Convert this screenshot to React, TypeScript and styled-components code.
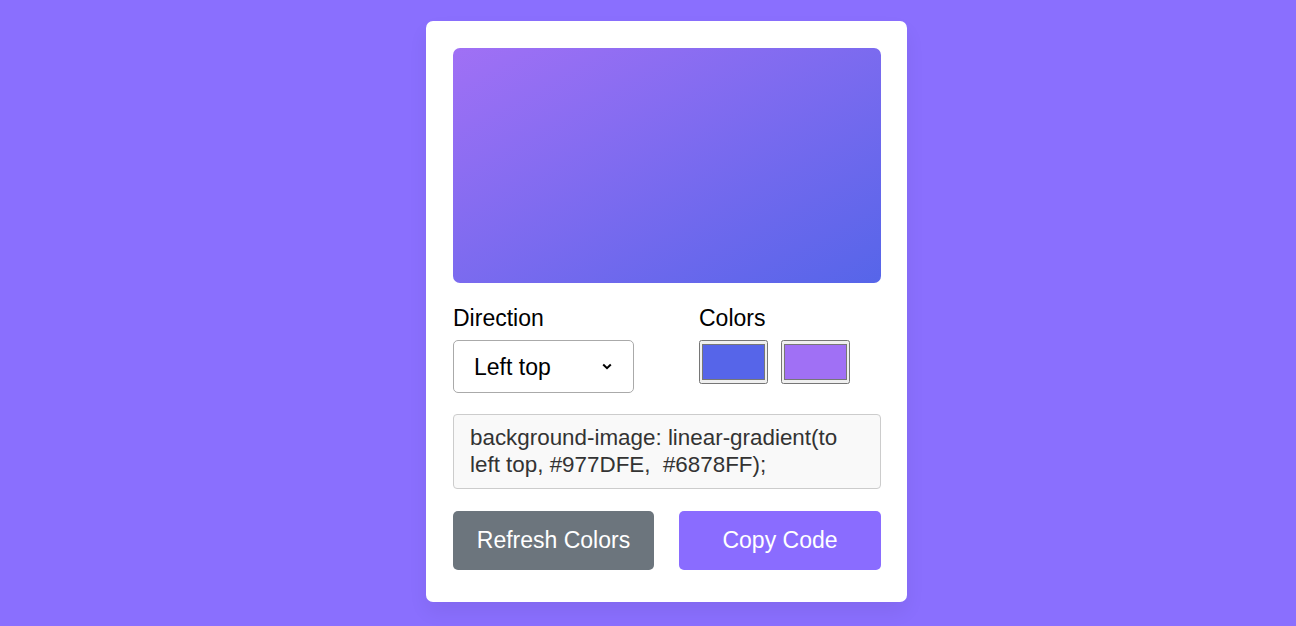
import React, { useState } from "react";
import styled, { createGlobalStyle } from "styled-components";

const Global = createGlobalStyle`
  html, body { margin: 0; padding: 0; }
  body {
    background: #8a6ffe;
    font-family: "Liberation Sans", Arial, sans-serif;
    min-height: 626px;
  }
  * { box-sizing: border-box; }
`;

const Page = styled.div`
  display: flex;
  justify-content: center;
  padding: 21px 0 0 37px;
`;

const Card = styled.div`
  width: 481px;
  background: #fff;
  border-radius: 7px;
  padding: 27px 26px 32px 27px;
  box-shadow: 0 10px 20px rgba(0, 0, 0, 0.06);
  display: flex;
  flex-direction: column;
`;

const Preview = styled.div<{ $from: string; $to: string }>`
  height: 235px;
  border-radius: 7px;
  background: linear-gradient(to left top, ${(p) => p.$from}, ${(p) => p.$to});
`;

const Options = styled.div`
  display: flex;
  margin-top: 22px;
`;

const Column = styled.div<{ $width: number }>`
  width: ${(p) => p.$width}px;
  display: flex;
  flex-direction: column;
`;

const Label = styled.p`
  margin: 0 0 9px;
  font-size: 23px;
  line-height: 26px;
  color: #000;
`;

const SelectWrap = styled.div`
  position: relative;
  width: 181px;
  height: 53px;
`;

const Select = styled.select`
  appearance: none;
  -webkit-appearance: none;
  width: 100%;
  height: 100%;
  border: 1px solid #aaa;
  border-radius: 5px;
  background: #fff;
  font-family: "Liberation Sans", Arial, sans-serif;
  font-size: 23px;
  color: #000;
  padding: 0 40px 0 20px;
  outline: none;
`;

const Chevron = styled.svg`
  position: absolute;
  left: 149px;
  top: 23px;
  width: 10px;
  height: 7px;
  pointer-events: none;
`;

const Swatches = styled.div`
  display: flex;
  gap: 13px;
`;

const ColorInput = styled.input`
  width: 69px;
  height: 44px;
  margin: 0;
  padding: 0;
  cursor: pointer;
  &::-webkit-color-swatch-wrapper {
    padding: 3px 2px;
  }
  &::-webkit-color-swatch {
    border: 1px solid #777;
  }
`;

const Code = styled.div`
  margin-top: 21px;
  background: #f9f9f9;
  border: 1px solid #ccc;
  border-radius: 4px;
  padding: 10px 16px;
  font-size: 22.4px;
  line-height: 26.5px;
  color: #333;
  white-space: pre-wrap;
`;

const Buttons = styled.div`
  display: grid;
  grid-template-columns: 201px 1fr;
  gap: 25px;
  margin-top: 22px;
`;

const Button = styled.button<{ $variant: "gray" | "purple" }>`
  height: 59px;
  border: none;
  border-radius: 5px;
  background: ${(p) => (p.$variant === "gray" ? "#6c757d" : "#8a6cff")};
  color: #fff;
  font-family: "Liberation Sans", Arial, sans-serif;
  font-size: 23px;
  cursor: pointer;
`;

export default function App() {
  const [dir, setDir] = useState("left top");
  const [c1, setC1] = useState("#5665e9");
  const [c2, setC2] = useState("#a070f5");
  return (
    <>
      <Global />
      <Page>
        <Card>
          <Preview $from={c1} $to={c2} />
          <Options>
            <Column $width={246}>
              <Label>Direction</Label>
              <SelectWrap>
                <Select value={dir} onChange={(e) => setDir(e.target.value)}>
                  <option value="top">Top</option>
                  <option value="right top">Right top</option>
                  <option value="right">Right</option>
                  <option value="right bottom">Right bottom</option>
                  <option value="bottom">Bottom</option>
                  <option value="left bottom">Left bottom</option>
                  <option value="left">Left</option>
                  <option value="left top">Left top</option>
                </Select>
                <Chevron viewBox="0 0 10 7">
                  <path d="M1.2 1.5 L5 5.2 L8.8 1.5" fill="none" stroke="#000" strokeWidth="2" />
                </Chevron>
              </SelectWrap>
            </Column>
            <Column $width={182}>
              <Label>Colors</Label>
              <Swatches>
                <ColorInput type="color" value={c1} onChange={(e) => setC1(e.target.value)} />
                <ColorInput type="color" value={c2} onChange={(e) => setC2(e.target.value)} />
              </Swatches>
            </Column>
          </Options>
          <Code>{"background-image: linear-gradient(to left top, #977DFE,  #6878FF);"}</Code>
          <Buttons>
            <Button $variant="gray">Refresh Colors</Button>
            <Button $variant="purple">Copy Code</Button>
          </Buttons>
        </Card>
      </Page>
    </>
  );
}
